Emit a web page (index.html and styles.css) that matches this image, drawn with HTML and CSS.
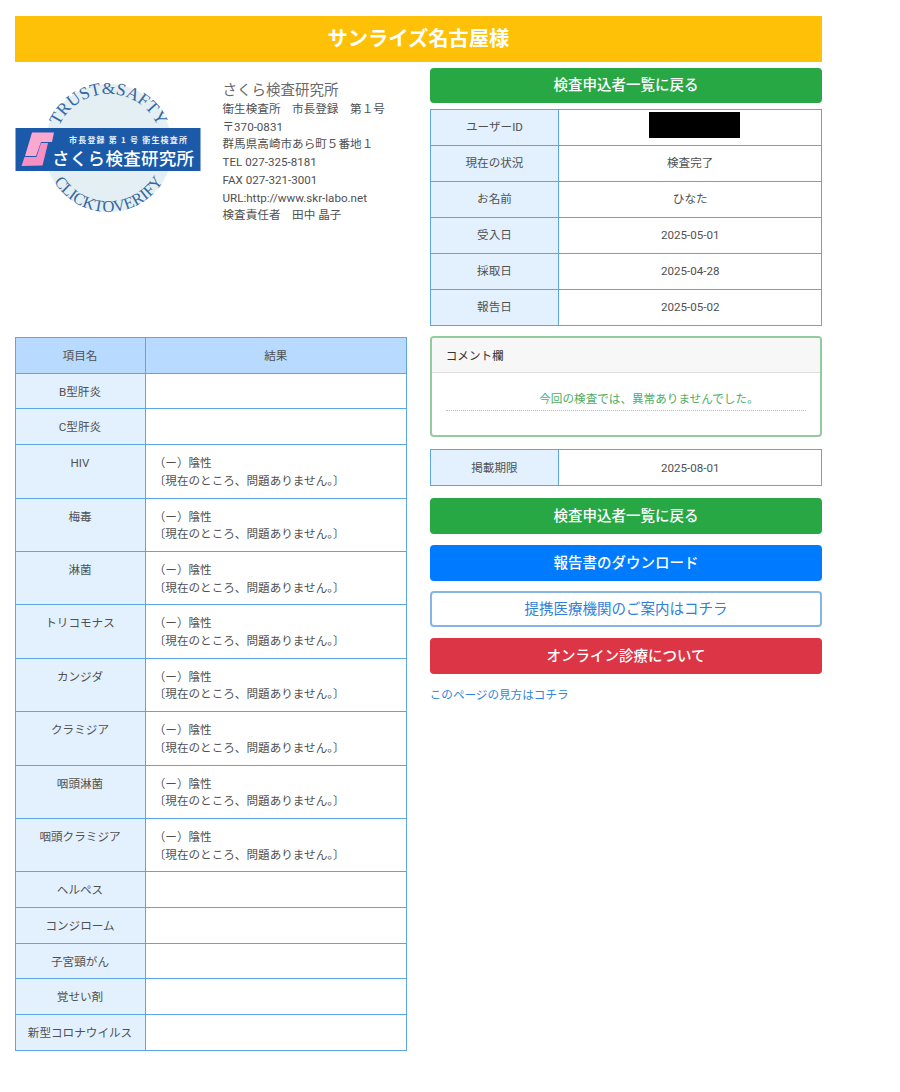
FILE: index.html
```html
<!DOCTYPE html>
<html lang="ja">
<head>
<meta charset="utf-8">
<title>検査結果</title>
<link rel="stylesheet" href="styles.css">
</head>
<body>
<div class="page">
  <h1 class="banner">サンライズ名古屋様</h1>
  <div class="columns">
    <div class="col-left">
      <div class="lab">
        <svg class="logo" viewBox="0 0 186 140" width="186" height="140" aria-label="さくら検査研究所">
          <defs>
            <path id="arc-top" d="M 39.5 67 A 54 54 0 0 1 147.5 67"/>
            <path id="arc-bottom" d="M 29.5 67 A 64 64 0 0 0 157.5 67"/>
          </defs>
          <circle cx="93.5" cy="67" r="64" fill="#e3eff3"/>
          <text class="seal"><textPath href="#arc-top" startOffset="50%" text-anchor="middle">TRUST&amp;SAFTY</textPath></text>
          <text class="seal seal-bottom"><textPath href="#arc-bottom" startOffset="50%" text-anchor="middle">CLICKTOVERIFY</textPath></text>
          <rect x="0.5" y="47" width="185" height="43" fill="#1a5aa8"/>
          <path d="M17 51.5 L39 51.5 L37 61 L26 61 L21 75 L10 75 Z" fill="#fba8d0"/>
          <path d="M33 62 L27.5 84.5 L6.5 85 L9.5 76 L21.5 76 L26 62 Z" fill="#f78fc5"/>
          <text class="band-small" x="54" y="62">市長登録 第 1 号 衛生検査所</text>
          <text class="band-large" x="37" y="84">さくら検査研究所</text>
        </svg>
        <div class="lab-info">
          <div class="lab-name">さくら検査研究所</div>
          <div>衛生検査所　市長登録　第１号</div>
          <div>〒370-0831</div>
          <div>群馬県高崎市あら町５番地１</div>
          <div>TEL 027-325-8181</div>
          <div>FAX 027-321-3001</div>
          <div>URL:http://www.skr-labo.net</div>
          <div>検査責任者　田中 晶子</div>
        </div>
      </div>
      <table class="grid results">
        <thead>
          <tr><th class="c-name">項目名</th><th>結果</th></tr>
        </thead>
        <tbody>
          <tr><th>B型肝炎</th><td></td></tr>
          <tr><th>C型肝炎</th><td></td></tr>
          <tr><th>HIV</th><td>（ー）陰性<br>〔現在のところ、問題ありません。〕</td></tr>
          <tr><th>梅毒</th><td>（ー）陰性<br>〔現在のところ、問題ありません。〕</td></tr>
          <tr><th>淋菌</th><td>（ー）陰性<br>〔現在のところ、問題ありません。〕</td></tr>
          <tr><th>トリコモナス</th><td>（ー）陰性<br>〔現在のところ、問題ありません。〕</td></tr>
          <tr><th>カンジダ</th><td>（ー）陰性<br>〔現在のところ、問題ありません。〕</td></tr>
          <tr><th>クラミジア</th><td>（ー）陰性<br>〔現在のところ、問題ありません。〕</td></tr>
          <tr><th>咽頭淋菌</th><td>（ー）陰性<br>〔現在のところ、問題ありません。〕</td></tr>
          <tr><th>咽頭クラミジア</th><td>（ー）陰性<br>〔現在のところ、問題ありません。〕</td></tr>
          <tr><th>ヘルペス</th><td></td></tr>
          <tr><th>コンジローム</th><td></td></tr>
          <tr><th>子宮頸がん</th><td></td></tr>
          <tr><th>覚せい剤</th><td></td></tr>
          <tr><th>新型コロナウイルス</th><td></td></tr>
        </tbody>
      </table>
    </div>
    <div class="col-right">
      <a class="btn btn-green btn-first" href="#">検査申込者一覧に戻る</a>
      <table class="grid info">
        <tbody>
          <tr><th class="c-label">ユーザーID</th><td class="id-cell"><span class="redact"></span></td></tr>
          <tr><th>現在の状況</th><td>検査完了</td></tr>
          <tr><th>お名前</th><td>ひなた</td></tr>
          <tr><th>受入日</th><td>2025-05-01</td></tr>
          <tr><th>採取日</th><td>2025-04-28</td></tr>
          <tr><th>報告日</th><td>2025-05-02</td></tr>
        </tbody>
      </table>
      <section class="card">
        <div class="card-head">コメント欄</div>
        <div class="card-body"><p class="comment">今回の検査では、異常ありませんでした。</p></div>
      </section>
      <table class="grid info">
        <tbody>
          <tr><th class="c-label">掲載期限</th><td>2025-08-01</td></tr>
        </tbody>
      </table>
      <div class="actions">
        <a class="btn btn-green" href="#">検査申込者一覧に戻る</a>
        <a class="btn btn-blue" href="#">報告書のダウンロード</a>
        <a class="btn btn-outline" href="#">提携医療機関のご案内はコチラ</a>
        <a class="btn btn-red" href="#">オンライン診療について</a>
      </div>
      <a class="help" href="#">このページの見方はコチラ</a>
    </div>
  </div>
</div>
</body>
</html>
```
FILE: styles.css
```css
* { box-sizing: border-box; }
html, body { margin: 0; background: #fff; }
body {
  font-family: Roboto, "Noto Sans CJK JP", sans-serif;
  font-size: 11.6px;
  line-height: 17.7px;
  color: #505050;
}
.page { width: 822.2px; padding: 16px 0 0 14.5px; }
.banner {
  margin: 0;
  height: 46px;
  background: #ffc107;
  color: #fff;
  font-size: 20.3px;
  font-weight: 700;
  line-height: 46px;
  text-align: center;
}
.columns {
  display: grid;
  grid-template-columns: 392.5px 392.5px;
  column-gap: 22.7px;
}
.lab {
  display: flex;
  height: 275px;
  padding-top: 19px;
}
.logo { flex: none; display: block; }
.lab-info { margin-left: 22px; margin-top: -1px; }
.lab-name { font-size: 14.5px; line-height: 21px; color: #6a6a6a; }
.seal {
  font-family: "Liberation Serif", serif;
  font-size: 17.5px;
  fill: #35689f;
}
.seal-bottom { font-size: 16.5px; }
.band-small {
  font-family: "Noto Sans CJK JP", sans-serif;
  font-size: 8px;
  font-weight: 700;
  letter-spacing: 1.2px;
  fill: #e8f0f8;
}
.band-large {
  font-family: "Noto Sans CJK JP", sans-serif;
  font-size: 17.5px;
  font-weight: 500;
  letter-spacing: 0.3px;
  fill: #fff;
}
.grid {
  width: 100%;
  border-collapse: collapse;
  table-layout: fixed;
  background: #fff;
}
.grid th, .grid td {
  border: 1px solid #5da6e6;
  padding: 10px 4px 7px;
  height: 35.7px;
  font-weight: 400;
  vertical-align: top;
  text-spacing-trim: trim-start;
}
.grid tbody th { background: #e3f1fe; text-align: center; }
.results thead th { background: #b8daff; text-align: center; }
.results td { padding-left: 14px; }
.c-name { width: 130px; }
.c-label { width: 128.5px; }
.info th, .info td { height: 36px; padding: 9.7px 4px 7.6px; }
.info td { text-align: center; }
.id-cell { position: relative; }
.redact {
  position: absolute;
  left: 90px;
  top: 2.5px;
  width: 91px;
  height: 26px;
  background: #000;
}
.btn {
  display: block;
  height: 36px;
  border: 1px solid transparent;
  border-radius: 4px;
  font-size: 14.5px;
  font-weight: 500;
  line-height: 35px;
  text-align: center;
  text-decoration: none;
}
.btn-first { height: 35px; line-height: 34px; margin-top: 6px; margin-bottom: 5.5px; }
.btn-green { background: #28a745; color: #fff; }
.btn-blue { background: #007bff; color: #fff; }
.btn-red { background: #dc3545; color: #fff; }
.btn-outline { background: #fff; color: #2f7fd8; border: 2px solid #85b5e4; font-weight: 400; line-height: 33px; }
.card {
  margin: 10.5px 0 12.5px;
  height: 100.6px;
  border: 2px solid #93cb9f;
  border-radius: 4px;
  overflow: hidden;
}
.card-head {
  height: 35px;
  padding: 9.5px 14px 0;
  background: #f7f7f7;
  border-bottom: 1px solid #dfdfdf;
  color: #333;
}
.card-body { padding: 17.5px 14px 0; }
.comment {
  margin: 0;
  padding-left: 46px;
  border-bottom: 1px dotted #bbb;
  color: #4dae62;
  text-align: center;
  height: 20px;
}
.actions {
  display: flex;
  flex-direction: column;
  gap: 10.5px;
  margin-top: 12px;
}
.help {
  display: block;
  margin-top: 13px;
  color: #2f86dc;
  text-decoration: none;
}
```
